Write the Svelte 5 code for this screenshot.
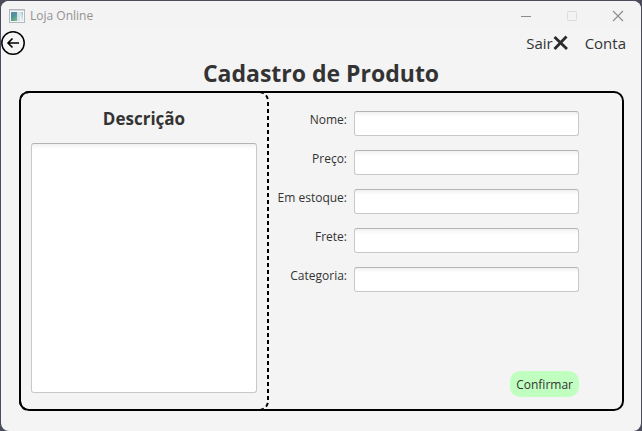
<script>
  const fields = [
    { id: 'nome', label: 'Nome:' },
    { id: 'preco', label: 'Preço:' },
    { id: 'estoque', label: 'Em estoque:' },
    { id: 'frete', label: 'Frete:' },
    { id: 'categoria', label: 'Categoria:' }
  ];
  let values = $state({ nome: '', preco: '', estoque: '', frete: '', categoria: '' });
  let descricao = $state('');
</script>

<div class="desktop">
  <div class="window">
    <header class="titlebar">
      <svg class="appicon" width="16" height="14" viewBox="0 0 16 14" aria-hidden="true">
        <defs>
          <linearGradient id="screen" x1="0" y1="0" x2="0.6" y2="1">
            <stop offset="0" stop-color="#5c86b4" />
            <stop offset="0.5" stop-color="#4f949c" />
            <stop offset="1" stop-color="#6cb884" />
          </linearGradient>
          <linearGradient id="side" x1="0" y1="1" x2="1" y2="0">
            <stop offset="0.3" stop-color="#eef2f6" />
            <stop offset="1" stop-color="#8fc4c0" />
          </linearGradient>
        </defs>
        <rect x="0.5" y="0.5" width="15" height="13" fill="#f5f7f8" stroke="#b3b8bc" />
        <rect x="1" y="1" width="14" height="1" fill="#d3d7da" />
        <rect x="2" y="3" width="6" height="9" fill="url(#screen)" />
        <rect x="8" y="3" width="3" height="9" fill="#d8e3ec" />
        <rect x="11" y="3" width="3" height="9" fill="url(#side)" />
      </svg>
      <span class="caption">Loja Online</span>
      <button class="winbtn" aria-label="Minimizar">
        <svg width="12" height="12" viewBox="0 0 12 12"><path d="M1 6.5H11" stroke="#8c8c8c" /></svg>
      </button>
      <button class="winbtn" aria-label="Maximizar" disabled>
        <svg width="12" height="12" viewBox="0 0 12 12"><rect x="1.5" y="1.5" width="9" height="9" rx="1" fill="none" stroke="#dcdcdc" /></svg>
      </button>
      <button class="winbtn" aria-label="Fechar">
        <svg width="12" height="12" viewBox="0 0 12 12"><path d="M1 1L11 11M11 1L1 11" stroke="#8c8c8c" stroke-width="1.1" /></svg>
      </button>
    </header>

    <nav class="toolbar">
      <button class="back" aria-label="Voltar">
        <svg width="24" height="24" viewBox="0 0 24 24" fill="none" stroke="#000">
          <circle cx="12" cy="12" r="11.2" stroke-width="1.5" />
          <path d="M18 12H7M11.5 7.5L7 12L11.5 16.5" stroke-width="1.6" />
        </svg>
      </button>
      <button class="link exit">
        Sair<svg width="16" height="16" viewBox="0 0 16 16" aria-hidden="true"><path d="M1.5 2L14 14M13.5 1.5L1.5 14" stroke="#2b2b2b" stroke-width="2.8" fill="none" /></svg>
      </button>
      <button class="link">Conta</button>
    </nav>

    <h1>Cadastro de Produto</h1>

    <main class="panel">
      <section class="description">
        <svg class="outline" aria-hidden="true"><rect x="1" y="1" rx="9" /></svg>
        <h2><label for="descricao">Descrição</label></h2>
        <textarea id="descricao" bind:value={descricao}></textarea>
      </section>
      <form class="details" onsubmit={(e) => e.preventDefault()}>
        {#each fields as field (field.id)}
          <div class="row">
            <label for={field.id}>{field.label}</label>
            <input id={field.id} type="text" bind:value={values[field.id]} />
          </div>
        {/each}
        <button class="confirm" type="submit">Confirmar</button>
      </form>
    </main>
  </div>
</div>

<style>
  * {
    box-sizing: border-box;
  }
  :global(body) {
    margin: 0;
    background: #4a4c5c;
  }
  button {
    font: inherit;
    color: inherit;
    padding: 0;
    border: 0;
    background: none;
  }
  svg {
    display: block;
    flex: none;
  }
  .desktop {
    display: flex;
    min-height: 100vh;
    padding: 1px 1px 0;
    font-family: "Open Sans", "Noto Sans", sans-serif;
    font-size: 12px;
    color: #333;
  }
  .window {
    flex: 1;
    display: flex;
    flex-direction: column;
    background: #f4f4f4;
    border-radius: 8px;
    overflow: hidden;
  }
  .titlebar {
    display: flex;
    align-items: center;
    height: 29px;
    padding-left: 8px;
    background: #f3f3f3;
    color: #929292;
  }
  .caption {
    flex: 1;
    margin-left: 5px;
  }
  .winbtn {
    display: flex;
    align-items: center;
    justify-content: center;
    width: 46px;
    height: 29px;
  }
  .toolbar {
    display: flex;
    align-items: center;
    height: 26px;
    padding-right: 15px;
    gap: 16px;
    font-size: 15px;
  }
  .back {
    margin-right: auto;
  }
  .exit {
    display: flex;
    align-items: center;
  }
  h1 {
    margin: 0;
    font-size: 23px;
    line-height: 35px;
    font-weight: 700;
    text-align: center;
  }
  .panel {
    flex: 1;
    display: flex;
    margin: 0 17px 20px 18px;
    border: 2px solid #000;
    border-radius: 10px;
  }
  .description {
    position: relative;
    display: flex;
    flex-direction: column;
    flex: 0 0 250px;
    margin: -2px;
    padding: 12px 12px 18px;
  }
  .outline {
    position: absolute;
    inset: 0;
    width: 100%;
    height: 100%;
    pointer-events: none;
  }
  .outline rect {
    width: calc(100% - 2px);
    height: calc(100% - 2px);
    fill: none;
    stroke: #000;
    stroke-width: 2px;
    stroke-dasharray: 4 3;
  }
  h2 {
    margin: 0 0 9px;
    font-size: 17px;
    line-height: 31px;
    font-weight: 700;
    text-align: center;
  }
  textarea,
  input {
    border: 1px solid #c8c8c8;
    border-top-color: #b4b4b4;
    border-radius: 3px;
    background: linear-gradient(#f1f1f1, #fff 5px);
    font: inherit;
    color: inherit;
    outline: none;
  }
  textarea {
    flex: 1;
    resize: none;
    padding: 4px 7px;
  }
  .details {
    flex: 1;
    display: flex;
    flex-direction: column;
    gap: 14px;
    padding: 18px 43px 12px 8px;
  }
  .row {
    display: flex;
    gap: 7px;
  }
  .row label {
    flex: 1;
    line-height: 18px;
    text-align: right;
    white-space: nowrap;
  }
  .row input {
    width: 225px;
    height: 25px;
    padding: 0 7px;
  }
  .confirm {
    align-self: flex-end;
    margin-top: auto;
    height: 26px;
    padding: 0 6px;
    border-radius: 10px;
    background: #c1ffc1;
  }
</style>
